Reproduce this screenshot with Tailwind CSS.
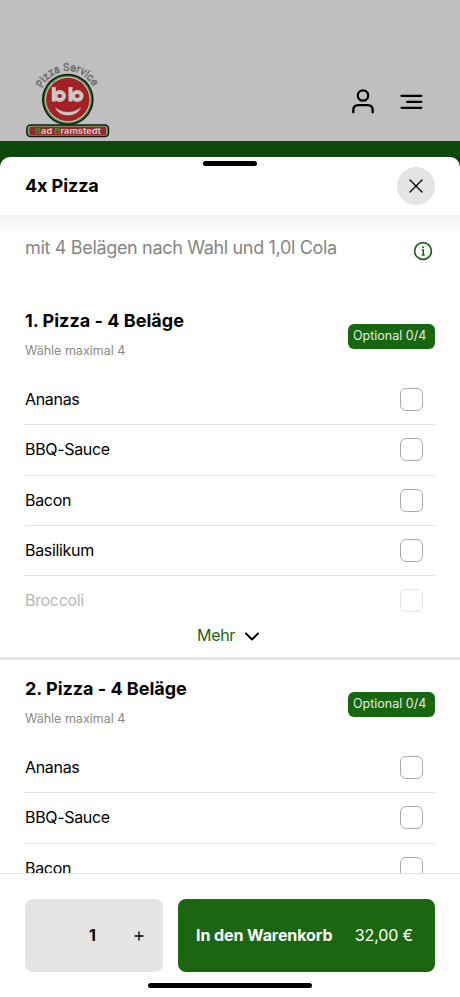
<!DOCTYPE html>
<html lang="de">
<head>
<meta charset="utf-8">
<meta name="viewport" content="width=device-width, initial-scale=1">
<title>4x Pizza</title>
<script src="https://cdn.jsdelivr.net/npm/@tailwindcss/browser@4"></script>
</head>
<body class="h-[997px] w-[460px] overflow-hidden bg-[#10480c] font-['Inter','Liberation_Sans',sans-serif] text-black">
<div class="flex h-[997px] flex-col">
  <header class="flex h-[141px] shrink-0 items-end bg-[#bfbfbf] pl-[25px]">
    <svg class="mb-[2px] h-[77px] w-[86px] overflow-visible" viewBox="0 0 86 77" font-family="Inter, sans-serif">
      <defs><path id="arc" d="M17.100 26.300A27.800 27.800 0 0 1 68.700 26.300"/></defs>
      <text font-size="10.500" fill="#c8c8c8" stroke="#4b4b4b" stroke-width=".5" textLength="64" lengthAdjust="spacingAndGlyphs"><textPath href="#arc">Pizza Service</textPath></text>
      <circle cx="42.800" cy="37.500" r="25.800" fill="#101810"/>
      <circle cx="42.800" cy="37.500" r="24.300" fill="#317a2e"/>
      <circle cx="42.800" cy="37.500" r="22.900" fill="#bfc5b8"/>
      <circle cx="42.800" cy="37.500" r="21.700" fill="#a32125"/>
      <g fill="none" stroke="#c8c8c8" stroke-width="4">
        <path d="M28.800 25v14.500M45.500 25v14.500"/><ellipse cx="34.700" cy="34" rx="4.300" ry="4"/><ellipse cx="52.300" cy="34" rx="4.300" ry="4"/>
      </g>
      <path d="M30.300 45.700q12.700 9 25.400 0q-3.200 7.600-12.700 7.600t-12.700-7.600z" fill="#c8c8c8" stroke="#c8c8c8" stroke-width=".3" stroke-linejoin="round"/>
      <rect x="1.900" y="63" width="81.600" height="11.600" rx="3.500" fill="#78a071" stroke="#111c11" stroke-width="1.500"/>
      <rect x="4.600" y="64.700" width="76.400" height="8.200" rx="1.500" fill="#99272a"/>
      <text x="10" y="71.800" font-size="7.800" font-weight="700" fill="#c8c8c8" textLength="66" lengthAdjust="spacingAndGlyphs"><tspan fill="#4d8426">B</tspan>ad <tspan fill="#4d8426">B</tspan>ramstedt</text>
    </svg>
    <svg class="mb-[25px] ml-[240px] h-7 w-6" viewBox="0 0 24 28" fill="none" stroke="#000" stroke-width="2.300" stroke-linecap="round"><circle cx="12" cy="7.500" r="5.200"/><path d="M2.300 24.300v-2.100q0-5 5.200-5h9q5.200 0 5.200 5v2.100"/></svg>
    <svg class="mb-[29px] ml-[25px] h-5 w-6" viewBox="0 0 24 20" fill="none" stroke="#000" stroke-width="2.300" stroke-linecap="round"><path d="M1.500 3.800h19.800M7 9.800h14.300M1.500 15.800h19.800"/></svg>
  </header>
  <main class="relative mt-4 flex min-h-0 flex-1 flex-col overflow-hidden rounded-t-[10px] bg-white">
    <div class="absolute top-[4px] left-[203px] h-[5px] w-[54px] rounded-full bg-black"></div>
    <div class="flex h-[58px] shrink-0 items-center justify-between px-[25px]">
      <h1 class="pb-[2px] text-[18px] font-bold tracking-[-0.1px]">4x Pizza</h1>
      <button class="grid size-[38px] place-items-center rounded-full bg-[#e4e4e4]"><svg class="size-[14px]" viewBox="0 0 14 14" stroke="#000" stroke-width="1.300" stroke-linecap="round"><path d="M1 1l12 12M13 1L1 13"/></svg></button>
    </div>
    <div class="flex min-h-0 flex-1 flex-col overflow-hidden">
      <div class="flex h-[77px] shrink-0 justify-between bg-linear-to-b from-[#f3f3f3] to-white to-25% px-[25px]">
        <p class="mt-[21px] text-[18px] leading-6 whitespace-nowrap tracking-[-0.330px] text-[#858585]">mit 4 Belägen nach Wahl und 1,0l Cola</p>
        <svg class="mt-[26px] mr-[2px] size-5" viewBox="0 0 20 20" fill="none" stroke="#18670f"><circle cx="10" cy="10" r="8.400" stroke-width="1.700"/><path d="M8.800 8.900H10.300V14M8.700 14H11.700" stroke-width="1.500"/><circle cx="10" cy="6.300" r="1.050" fill="#18670f" stroke="none"/></svg>
      </div>
      <section class="flex h-[368px] shrink-0 flex-col border-b-[3px] border-[#e4e4e4]">
        <div class="flex h-[83px] shrink-0 justify-between px-[25px]">
          <div><h2 class="mt-[17px] text-[18px] leading-6 font-bold tracking-[0.020px] whitespace-nowrap">1. Pizza - 4 Beläge</h2><p class="mt-[10px] text-[12.500px] leading-4 text-[#8b8b8b]">Wähle maximal 4</p></div>
          <span class="mt-8 flex h-[25px] w-[87px] items-center rounded-[6px] bg-[#18670f] pl-[5px] text-[12.500px] whitespace-nowrap text-[#e4eee3]">Optional 0/4</span>
        </div>
        <ul class="px-[25px] text-[16px] tracking-[-0.320px]">
          <li class="flex h-[50.250px] items-center justify-between border-b border-[#e4e4e4] pr-[12px]"><span class="pb-px">Ananas</span><span class="size-[23px] rounded-[6px] border border-[#aaa]"></span></li>
          <li class="flex h-[50.250px] items-center justify-between border-b border-[#e4e4e4] pr-[12px]"><span class="pb-px">BBQ-Sauce</span><span class="size-[23px] rounded-[6px] border border-[#aaa]"></span></li>
          <li class="flex h-[50.250px] items-center justify-between border-b border-[#e4e4e4] pr-[12px]">Bacon<span class="size-[23px] rounded-[6px] border border-[#aaa]"></span></li>
          <li class="flex h-[50px] items-center justify-between border-b border-[#e4e4e4] pr-[12px]">Basilikum<span class="size-[23px] rounded-[6px] border border-[#aaa]"></span></li>
          <li class="flex h-[49px] items-center justify-between pr-[12px] text-[#b7b7b7]">Broccoli<span class="size-[23px] rounded-[6px] border border-[#e5e5e5]"></span></li>
        </ul>
        <button class="ml-[197px] flex h-[20px] items-center gap-[10px] text-[16px] tracking-[-0.300px] text-[#18670f]">Mehr<svg class="mt-[3px] h-[9px] w-[14px]" viewBox="0 0 14 9" fill="none" stroke="#000" stroke-width="1.900" stroke-linecap="round" stroke-linejoin="round"><path d="M1 1.500l6 6 6-6"/></svg></button>
      </section>
      <section class="flex h-[368px] shrink-0 flex-col">
        <div class="flex h-[83px] shrink-0 justify-between px-[25px]">
          <div><h2 class="mt-[17px] text-[18px] leading-6 font-bold tracking-[-0.020px] whitespace-nowrap">2. Pizza - 4 Beläge</h2><p class="mt-[10px] text-[12.500px] leading-4 text-[#8b8b8b]">Wähle maximal 4</p></div>
          <span class="mt-8 flex h-[25px] w-[87px] items-center rounded-[6px] bg-[#18670f] pl-[5px] text-[12.500px] whitespace-nowrap text-[#e4eee3]">Optional 0/4</span>
        </div>
        <ul class="px-[25px] text-[16px] tracking-[-0.320px]">
          <li class="flex h-[50.250px] items-center justify-between border-b border-[#e4e4e4] pr-[12px]"><span class="pb-px">Ananas</span><span class="size-[23px] rounded-[6px] border border-[#aaa]"></span></li>
          <li class="flex h-[50.250px] items-center justify-between border-b border-[#e4e4e4] pr-[12px]"><span class="pb-px">BBQ-Sauce</span><span class="size-[23px] rounded-[6px] border border-[#aaa]"></span></li>
          <li class="flex h-[50.250px] items-center justify-between border-b border-[#e4e4e4] pr-[12px]">Bacon<span class="size-[23px] rounded-[6px] border border-[#aaa]"></span></li>
        </ul>
      </section>
    </div>
    <footer class="flex h-[124px] shrink-0 flex-col border-t border-[#e4e4e4] bg-white px-[25px] pt-[25px]">
      <div class="flex h-[73px] gap-[15px] text-[16px]">
        <div class="flex w-[138px] items-center rounded-[8px] bg-[#e4e4e4] pl-[64px]"><span class="w-[45px] pb-[2px] font-bold">1</span><svg class="size-[10px]" viewBox="0 0 10 10" stroke="#000" stroke-width="1.300"><path d="M.5 5h9M5 .5v9"/></svg></div>
        <button class="flex flex-1 items-center justify-between rounded-[8px] bg-[#1b6711] pr-[22px] pb-px pl-[18px] whitespace-nowrap text-white"><b class="font-bold tracking-[-0.080px]">In den Warenkorb</b><span class="tracking-[-0.150px]">32,00 €</span></button>
      </div>
      <div class="mt-[11px] h-[5px] w-[164px] self-center rounded-full bg-black"></div>
    </footer>
  </main>
</div>
</body>
</html>
